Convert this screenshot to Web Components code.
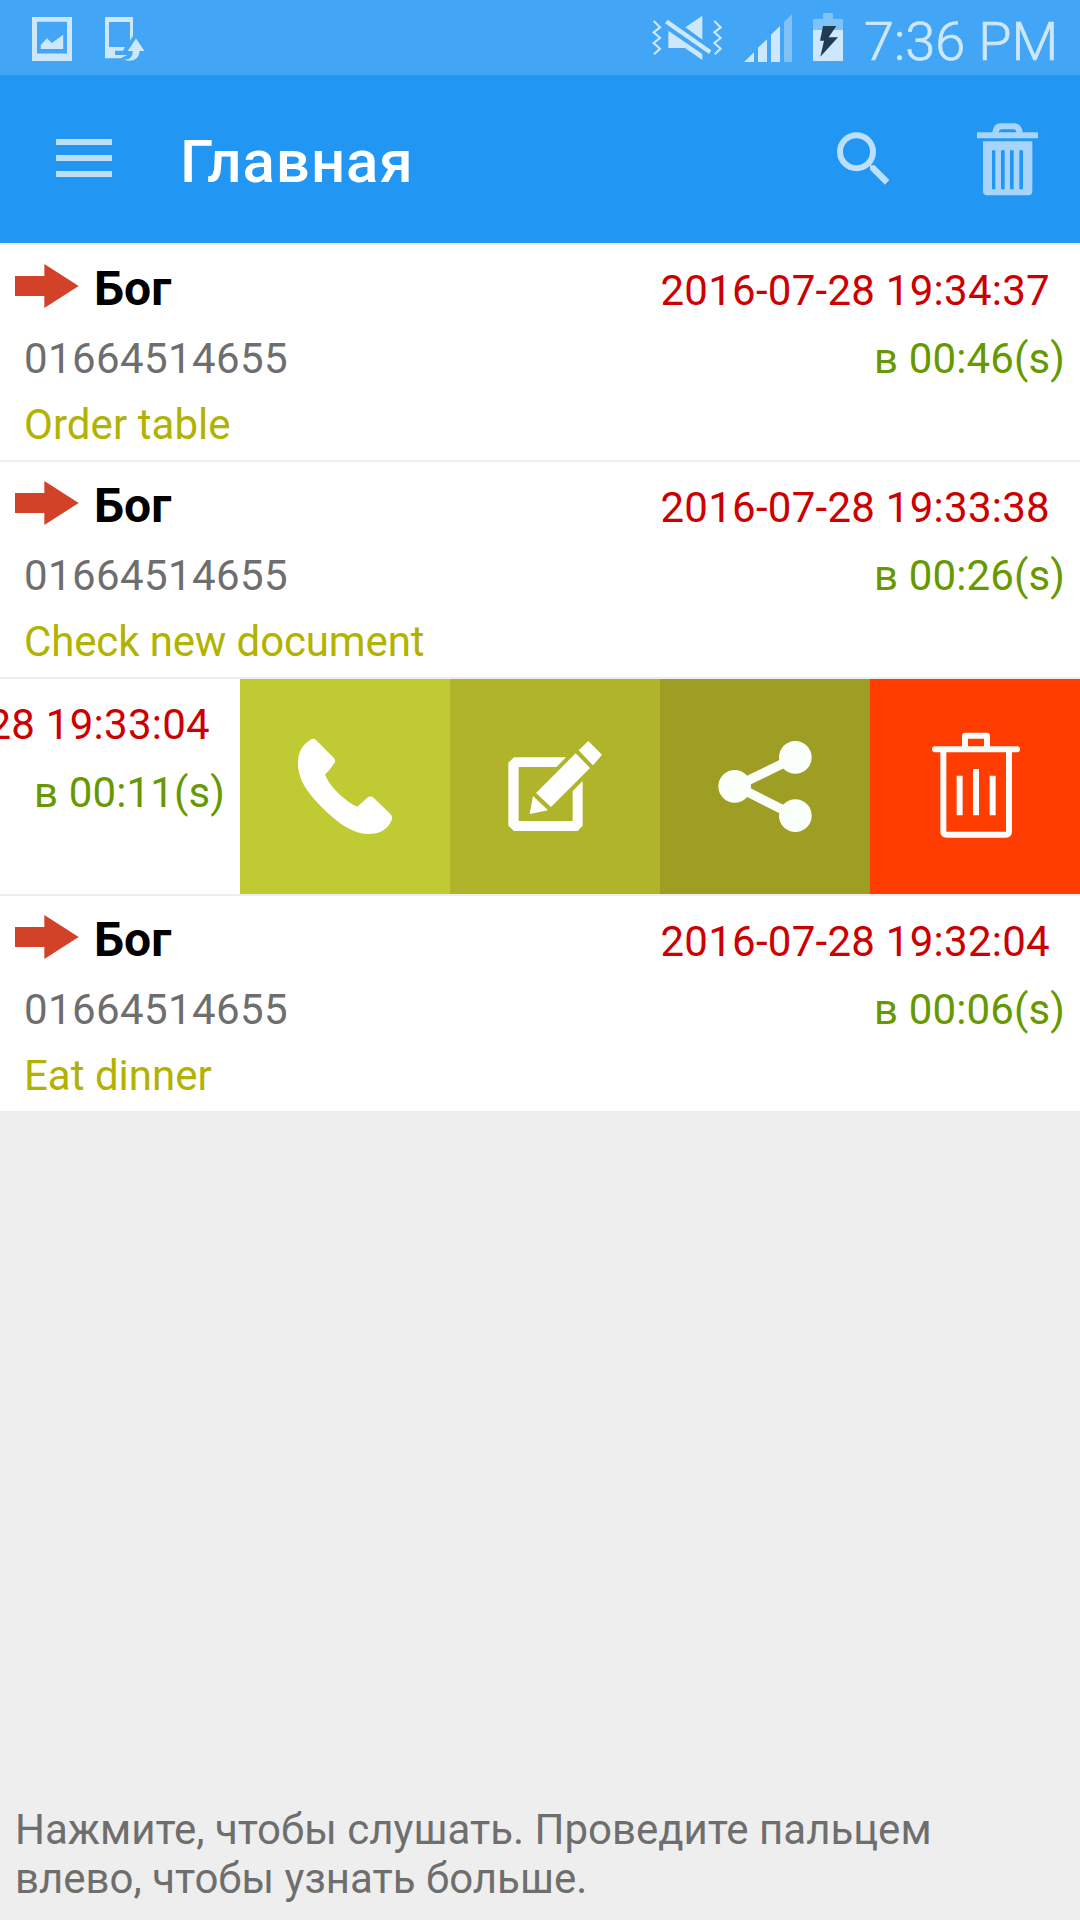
<!DOCTYPE html>
<html lang="ru">
<head>
<meta charset="utf-8">
<title>Главная</title>
<style>
html, body { margin: 0; height: 100%; }
body { font-family: Roboto, "Noto Sans", sans-serif; background: #eee; overflow: hidden; }
</style>
</head>
<body>
<call-app></call-app>

<script>
const define = (name, html, setup) => {
  const template = document.createElement('template');
  template.innerHTML = html;
  customElements.define(name, class extends HTMLElement {
    constructor() {
      super();
      this.attachShadow({ mode: 'open' }).append(template.content.cloneNode(true));
    }
    connectedCallback() { if (setup) setup(this, this.shadowRoot); }
  });
};

const icons = {
  picture: { w: 40, h: 44, box: '32 17 40 44', art: '<path fill-rule="evenodd" d="M32 17h40v44H32zM37 21.700V53.500H67V21.700z"/><path d="M40.700 49V45L47 38.200 51.700 43 63.200 34.700V49z"/>' },
  transfer: { w: 40, h: 44, box: '105 17 40 44', art: '<path d="M105 17H133V36L130 40.500V22H109V47H125L123 50.700H115V55H127.500L120.500 58.200H105z"/><path d="M136 38.500L144.500 51H139.500C139.500 57 135.500 60.700 129.500 60.700Q126.500 60.700 124.500 59.500C130.500 59.500 132.800 56.500 132.700 51H127.700z"/>' },
  mute: { w: 70, h: 48, box: '95 42 210 144', art: '<path d="M246 47V119L195 82zM144 92L246 162V180L194 144H144zM142 59L273 151 266 162 134 70z"/><path d="M100 63L119 82 100 97 119 114 100 129 119 146 101 163M282 63L301 82 282 97 301 114 282 129 301 146 283 163" fill="none" stroke="currentColor" stroke-width="6.500"/>' },
  signal: { w: 48, h: 48, box: '372 42 144 144', art: '<path d="M372 186L402 157V186zM414 186V143L441 118V186zM453 186V104L480 78V186z"/><path opacity=".45" d="M492 186V66L516 42V186z"/>' },
  battery: { w: 30, h: 48, box: '579 39 90 144', art: '<path opacity=".45" d="M609 39H639V57H669V90H579V57H609z"/><path d="M579 90H669V183H579z"/><path fill="#203c54" d="M609 78H649L626 112H654L601 170 612 122H600z"/>' },
  menu: { w: 56, h: 38, box: '0 0 56 38', art: '<path d="M0 0H56V6H0zM0 16H56V22H0zM0 32H56V38H0z"/>' },
  search: { w: 53, h: 53, box: '171 125 159 159', art: '<circle cx="229.500" cy="184" r="49.500" fill="none" stroke="currentColor" stroke-width="18"/><path d="M270 225H284L328 269 315 283 270 238z"/>' },
  bin: { w: 61, h: 73, box: '591 98 183 219', art: '<path fill-rule="evenodd" d="M591 126H637Q640 99 662 99H703Q725 99 728 126H774V144H591zM656 126H709Q708 117 700 117H666Q658 117 656 126z"/><path fill-rule="evenodd" d="M609 153H757V302Q757 315 744 315H622Q609 315 609 302zM636 180V297H646V180zM663 180V297H674V180zM690 180V297H701V180zM718 180V297H729V180z"/>' },
  arrow: { w: 64, h: 44, box: '45 72 192 132', art: '<path d="M45 108H133V72L236 138 133 204V168H45z"/>' },
  call: { w: 210, h: 215, box: '720 27 630 645', art: '<path d="M931 210Q940 203 948 210L1001 263Q1009 272 1003 279Q992 298 975 314C992 354 1037 394 1072 410L1101 384Q1111 376 1121 383L1171 432Q1179 440 1175 450C1163 480 1138 492 1104 492C1056 491 1009 455 964 410C918 364 894 326 894 280C894 246 907 224 931 210z"/>' },
  edit: { w: 210, h: 215, box: '30 27 630 645', art: '<path d="M222 262H378L349 291H236V453H398V363L428 333V467L413 483H222L205 467V278z"/><path d="M445 213L486 254 459 286 416 241zM407 250L450 294 333 411 288 369zM279 378L324 421 269 432z"/>' },
  share: { w: 210, h: 215, box: '0 27 630 645', art: '<circle cx="224" cy="349" r="49"/><circle cx="406" cy="262" r="49"/><circle cx="406" cy="437" r="49"/><path d="M390 270L245 341 Q237 349 245 357L390 430" fill="none" stroke="currentColor" stroke-width="28"/>' },
  remove: { w: 210, h: 215, box: '630 27 630 645', art: '<g fill="none" stroke="currentColor" stroke-width="18"><path d="M825 238H1071" stroke-linecap="round"/><path d="M915 236V197H981V236M850 240V484Q850 494 860 494H1037Q1047 494 1047 484V240" stroke-linejoin="round"/><path d="M899 317V436M948 297V436M998 317V436"/></g>' }
};

define('ui-icon', `<style>:host{display:block;flex:none}svg{display:block;fill:currentColor}</style><svg></svg>`, (el, root) => {
  const icon = icons[el.getAttribute('name')];
  const svg = root.querySelector('svg');
  svg.setAttribute('viewBox', icon.box);
  svg.setAttribute('width', icon.w);
  svg.setAttribute('height', icon.h);
  svg.innerHTML = icon.art;
});

define('status-bar', `
<style>
:host{display:flex;box-sizing:border-box;height:75px;padding:0 21px 0 32px;background:#42a5f5;color:#cde7fd;align-items:flex-start}
.group{display:flex;align-items:flex-start}
.left{gap:33px;padding-top:17px}
.right{margin-left:auto;padding-top:13px}
.mute{margin:1px 22px 0 0}.signal{margin:1px 21px 0 0}
time{display:block;margin:0 0 0 21px;width:195px;font-size:54px;font-weight:300;line-height:57px;white-space:nowrap;-webkit-text-stroke:.7px currentColor}
</style>
<div class="group left"><ui-icon name="picture"></ui-icon><ui-icon name="transfer"></ui-icon></div>
<div class="group right"><ui-icon class="mute" name="mute"></ui-icon><ui-icon class="signal" name="signal"></ui-icon><ui-icon name="battery"></ui-icon><time>7:36 PM</time></div>`);

define('app-bar', `
<style>
:host{display:flex;box-sizing:border-box;height:168px;padding:0 42px 0 56px;background:#2196f3;color:#bcdffb;align-items:flex-start}
.menu{margin-top:64px}
h1{margin:0 auto 0 68px;padding-top:5px;color:#fff;font-size:60px;font-weight:500;line-height:163px;letter-spacing:.95px}
.search{margin:57px 87px 0 0}
.bin{margin-top:48px;color:#a8d4fa}
</style>
<ui-icon class="menu" name="menu"></ui-icon><h1><slot></slot></h1><ui-icon class="search" name="search"></ui-icon><ui-icon class="bin" name="bin"></ui-icon>`);

define('call-times', `
<style>
:host{display:flex;flex-direction:column;align-items:flex-end;font-size:42px;white-space:nowrap}
.date{padding:8px 30px 0 0;height:73px;line-height:75px;color:#c00;letter-spacing:.27px}
.length{padding-right:15px;line-height:66px;color:#690;letter-spacing:.13px}
</style>
<div class="date"><slot name="date"></slot></div><div class="length"><slot name="length"></slot></div>`);

define('call-row', `
<style>
:host{display:flex;height:215px;background:#fff;justify-content:space-between}
.who{display:flex;flex-direction:column}
.head{display:flex;height:81px;padding-left:15px;align-items:flex-start}
.arrow{margin-top:19px;color:#d24229}
.name{margin-left:15px;padding-top:6px;font-size:48px;font-weight:700;line-height:75px;color:#000}
.line{padding-left:24px;font-size:42px;line-height:66px;white-space:nowrap}
.phone{color:#6e6e6e;letter-spacing:.4px}
.note{color:#b2b200}
</style>
<div class="who">
<div class="head"><ui-icon class="arrow" name="arrow"></ui-icon><div class="name"><slot name="name"></slot></div></div>
<div class="line phone"><slot name="phone"></slot></div><div class="line note"><slot name="note"></slot></div>
</div>
<call-times><span class="d" slot="date"></span><span class="l" slot="length"></span></call-times>`, (el, root) => {
  root.querySelector('.d').textContent = el.getAttribute('date');
  root.querySelector('.l').textContent = el.getAttribute('length');
  root.querySelector('.note').style.letterSpacing = el.getAttribute('tracking') || 'normal';
});

define('swipe-row', `
<style>
:host{display:flex;height:215px;background:#fff;overflow:hidden}
.front{display:flex;justify-content:flex-end;width:240px;flex:none;overflow:hidden}
.action{flex:1;color:#fff}
.call{background:#c0ca33}.edit{background:#afb42b}.share{background:#9e9d24;color:#fafffa}.remove{background:#ff3d00;color:#fcfdfb}
</style>
<div class="front"><slot></slot></div>
<div class="action call"><ui-icon name="call"></ui-icon></div><div class="action edit"><ui-icon name="edit"></ui-icon></div><div class="action share"><ui-icon name="share"></ui-icon></div><div class="action remove"><ui-icon name="remove"></ui-icon></div>`);

define('hint-text', `
<style>:host{display:block;margin-top:auto;padding:0 100px 17px 15px;font-size:42px;line-height:49px;color:#6e6e6e}</style><slot></slot>`);

define('call-app', `
<style>
:host{display:flex;flex-direction:column;width:1080px;height:1920px;background:#eee}
.list{display:flex;flex-direction:column;gap:2px;padding-top:2px}
</style>
<status-bar></status-bar>
<app-bar>Главная</app-bar>
<div class="list">
<call-row date="2016-07-28 19:34:37" length="в 00:46(s)" tracking=".06px"><span slot="name">Бог</span><span slot="phone">01664514655</span><span slot="note">Order table</span></call-row>
<call-row date="2016-07-28 19:33:38" length="в 00:26(s)" tracking="-.13px"><span slot="name">Бог</span><span slot="phone">01664514655</span><span slot="note">Check new document</span></call-row>
<swipe-row><call-times><span slot="date">2016-07-28 19:33:04</span><span slot="length">в 00:11(s)</span></call-times></swipe-row>
<call-row date="2016-07-28 19:32:04" length="в 00:06(s)"><span slot="name">Бог</span><span slot="phone">01664514655</span><span slot="note">Eat dinner</span></call-row>
</div>
<hint-text>Нажмите, чтобы слушать. Проведите пальцем<br>влево, чтобы узнать больше.</hint-text>`);
</script>
</body>
</html>
